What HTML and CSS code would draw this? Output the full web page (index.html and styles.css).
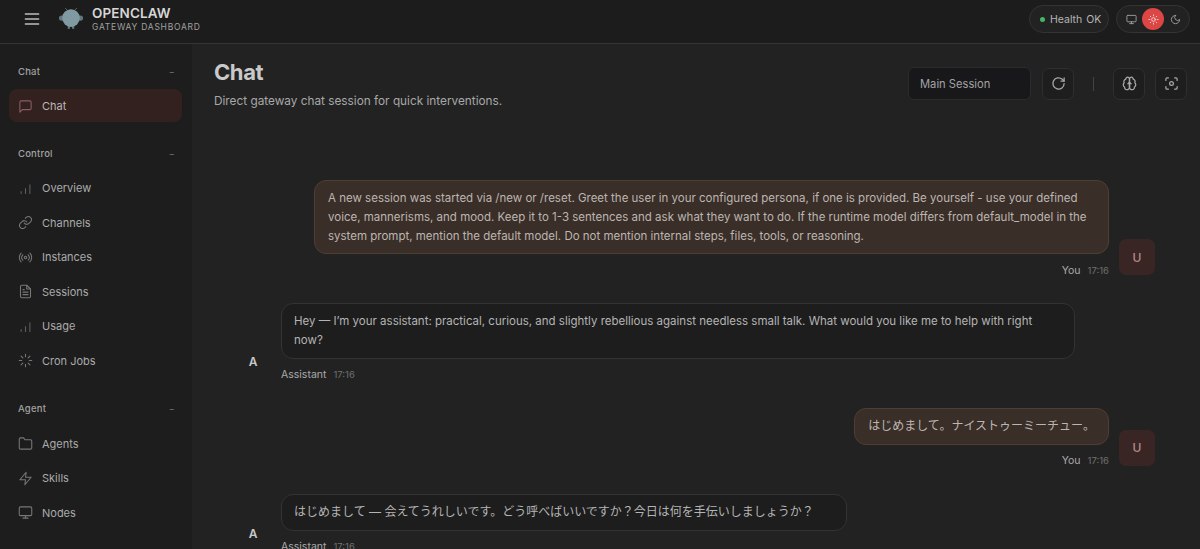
FILE: index.html
```html
<!DOCTYPE html>
<html lang="en">
<head>
<meta charset="utf-8">
<title>OpenClaw Gateway Dashboard</title>
<link rel="stylesheet" href="styles.css">
</head>
<body>
<div class="shell">
  <header class="topbar">
    <div class="brand-side">
      <button class="menu-btn" aria-label="Menu">
        <svg viewBox="0 0 24 24" class="ic-menu"><path d="M4 6h16M4 12h16M4 18h16"/></svg>
      </button>
      <svg class="logo" viewBox="0 0 28 28">
        <path class="logo-ant" d="M10 4.500 8 2.500M18 4.500l2-2"/>
        <ellipse class="logo-side" cx="3.8" cy="13" rx="2.8" ry="2.8"/>
        <ellipse class="logo-side" cx="24.2" cy="13" rx="2.800" ry="2.800"/>
        <rect class="logo-side" x="10.500" y="21" width="2.400" height="3.600"/>
        <rect class="logo-side" x="15.100" y="21" width="2.400" height="3.600"/>
        <circle class="logo-fill" cx="14" cy="13" r="9.500"/>
      </svg>
      <div class="brand-text">
        <div class="brand-title">OPENCLAW</div>
        <div class="brand-sub">GATEWAY DASHBOARD</div>
      </div>
    </div>
    <div class="top-right">
      <div class="pill health"><span class="dot"></span><span>Health</span><span class="ok">OK</span></div>
      <div class="pill theme">
        <span class="theme-btn"><svg viewBox="0 0 24 24" class="ic11"><rect x="2" y="3" width="20" height="14" rx="2"/><path d="M8 21h8M12 17v4"/></svg></span>
        <span class="theme-btn on"><svg viewBox="0 0 24 24" class="ic11"><circle cx="12" cy="12" r="4"/><path d="M12 2v2M12 20v2M4.900 4.900l1.400 1.400M17.700 17.700l1.400 1.400M2 12h2M20 12h2M6.300 17.700l-1.400 1.400M19.100 4.900l-1.400 1.400"/></svg></span>
        <span class="theme-btn"><svg viewBox="0 0 24 24" class="ic11"><path d="M12 3a6 6 0 0 0 9 9 9 9 0 1 1-9-9Z"/></svg></span>
      </div>
    </div>
  </header>
  <div class="body-row">
    <nav class="sidebar">
      <div class="nav-label first"><span>Chat</span><span class="minus">−</span></div>
      <a class="nav-item active"><svg viewBox="0 0 24 24" class="ic14"><path d="M21 15a2 2 0 0 1-2 2H7l-4 4V5a2 2 0 0 1 2-2h14a2 2 0 0 1 2 2z"/></svg>Chat</a>
      <div class="nav-label"><span>Control</span><span class="minus">−</span></div>
      <a class="nav-item"><svg viewBox="0 0 24 24" class="ic14 dim"><path d="M5 20v-3M12 20v-8M19 20V6"/></svg>Overview</a>
      <a class="nav-item"><svg viewBox="0 0 24 24" class="ic14"><path d="M10 13a5 5 0 0 0 7.500.500l3-3a5 5 0 0 0-7-7l-1.700 1.700"/><path d="M14 11a5 5 0 0 0-7.500-.500l-3 3a5 5 0 0 0 7 7l1.700-1.700"/></svg>Channels</a>
      <a class="nav-item"><svg viewBox="0 0 24 24" class="ic14"><circle cx="12" cy="12" r="2"/><path d="M16.200 7.800a6 6 0 0 1 0 8.400M7.800 16.200a6 6 0 0 1 0-8.400M19 5a10 10 0 0 1 0 14M5 19A10 10 0 0 1 5 5"/></svg>Instances</a>
      <a class="nav-item"><svg viewBox="0 0 24 24" class="ic14"><path d="M14 2H6a2 2 0 0 0-2 2v16a2 2 0 0 0 2 2h12a2 2 0 0 0 2-2V8z"/><path d="M14 2v6h6M16 13H8M16 17H8M10 9H8"/></svg>Sessions</a>
      <a class="nav-item"><svg viewBox="0 0 24 24" class="ic14 dim"><path d="M5 20v-3M12 20v-8M19 20V6"/></svg>Usage</a>
      <a class="nav-item"><svg viewBox="0 0 24 24" class="ic14"><path d="M12 2v4M12 18v4M4.900 4.900l2.900 2.900M16.200 16.200l2.900 2.900M2 12h4M18 12h4M4.900 19.100l2.900-2.900M16.200 7.800l2.900-2.900"/></svg>Cron Jobs</a>
      <div class="nav-label"><span>Agent</span><span class="minus">−</span></div>
      <a class="nav-item"><svg viewBox="0 0 24 24" class="ic14"><path d="M22 19a2 2 0 0 1-2 2H4a2 2 0 0 1-2-2V5a2 2 0 0 1 2-2h5l2 3h9a2 2 0 0 1 2 2z"/></svg>Agents</a>
      <a class="nav-item"><svg viewBox="0 0 24 24" class="ic14"><path d="M13 2 3 14h9l-1 8 10-12h-9z"/></svg>Skills</a>
      <a class="nav-item"><svg viewBox="0 0 24 24" class="ic14"><rect x="2" y="3" width="20" height="14" rx="2"/><path d="M8 21h8M12 17v4"/></svg>Nodes</a>
    </nav>
    <main class="main">
      <div class="page-head">
        <div>
          <h1 class="page-title">Chat</h1>
          <p class="page-sub">Direct gateway chat session for quick interventions.</p>
        </div>
        <div class="tools">
          <div class="session-select">Main Session</div>
          <button class="tool"><svg viewBox="0 0 24 24" class="ic14"><path d="M21 12a9 9 0 1 1-3-6.700L21 8"/><path d="M21 3v5h-5"/></svg></button>
          <span class="tool-sep"></span>
          <button class="tool"><svg viewBox="0 0 24 24" class="ic14"><path d="M12 5a3 3 0 1 0-5.997.125 4 4 0 0 0-2.526 5.770 4 4 0 0 0 .556 6.588A4 4 0 1 0 12 18Z"/><path d="M12 5a3 3 0 1 1 5.997.125 4 4 0 0 1 2.526 5.770 4 4 0 0 1-.556 6.588A4 4 0 1 1 12 18Z"/><path d="M12 18v-8M9.500 12.500 12 10l2.500 2.500"/></svg></button>
          <button class="tool"><svg viewBox="0 0 24 24" class="ic14"><path d="M3 7V5a2 2 0 0 1 2-2h2M17 3h2a2 2 0 0 1 2 2v2M21 17v2a2 2 0 0 1-2 2h-2M7 21H5a2 2 0 0 1-2-2v-2"/><circle cx="12" cy="12" r="3"/></svg></button>
        </div>
      </div>
      <section class="thread">
        <div class="group user g1">
          <div class="stack">
            <div class="bubble">A new session was started via /new or /reset. Greet the user in your configured persona, if one is provided. Be yourself - use your defined voice, mannerisms, and mood. Keep it to 1-3 sentences and ask what they want to do. If the runtime model differs from default_model in the system prompt, mention the default model. Do not mention internal steps, files, tools, or reasoning.</div>
            <div class="meta"><span class="who">You</span><span class="time">17:16</span></div>
          </div>
          <div class="avatar">U</div>
        </div>
        <div class="group assistant">
          <div class="avatar">A</div>
          <div class="stack">
            <div class="bubble wide">Hey — I’m your assistant: practical, curious, and slightly rebellious against needless small talk. What would you like me to help with right now?</div>
            <div class="meta"><span class="who">Assistant</span><span class="time">17:16</span></div>
          </div>
        </div>
        <div class="group user">
          <div class="stack">
            <div class="bubble cjk">はじめまして。ナイストゥーミーチュー。</div>
            <div class="meta"><span class="who">You</span><span class="time">17:16</span></div>
          </div>
          <div class="avatar">U</div>
        </div>
        <div class="group assistant">
          <div class="avatar">A</div>
          <div class="stack">
            <div class="bubble cjk reply">はじめまして — 会えてうれしいです。どう呼べばいいですか？今日は何を手伝いしましょうか？</div>
            <div class="meta"><span class="who">Assistant</span><span class="time">17:16</span></div>
          </div>
        </div>
      </section>
    </main>
  </div>
</div>
</body>
</html>
```
FILE: styles.css
```css
* { box-sizing: border-box; }
html, body { margin: 0; height: 100%; overflow: hidden; }
body {
  background: #222222;
  color: #c8c8c8;
  font-family: Inter, "Noto Sans CJK JP", sans-serif;
  font-size: 11px;
}
svg { fill: none; stroke: currentColor; stroke-width: 2; stroke-linecap: round; stroke-linejoin: round; flex: none; }
.ic-menu { width: 20px; height: 20px; stroke-width: 1.6; }
.ic14 { width: 15px; height: 15px; }
.ic11 { width: 11px; height: 11px; }
.shell { height: 549px; display: flex; flex-direction: column; }

.topbar {
  height: 44px; flex: none;
  display: flex; justify-content: space-between; align-items: center;
  padding: 0 10px 5px 22px;
  background: #1c1c1c;
  border-bottom: 1px solid #333333;
}
.brand-side { display: flex; align-items: center; }
.menu-btn { background: none; border: 0; padding: 0; color: #bdbdbd; width: 20px; height: 20px; display: flex; }
.logo { width: 26px; height: 26px; margin-left: 16px; stroke: none; }
.logo-fill { fill: #7f9aa1; }
.logo-side { fill: #5f777d; }
.logo-ant { stroke: #5a6f75; stroke-width: 1; }
.brand-text { margin-left: 8px; display: flex; flex-direction: column; }
.brand-title { font-size: 13.5px; font-weight: 600; color: #d6d6d6; line-height: 15px; letter-spacing: 0.1px; }
.brand-sub { font-size: 8.5px; color: #a0a0a0; line-height: 11px; letter-spacing: 0.75px; margin-top: 1px; }
.top-right { display: flex; align-items: center; gap: 7px; }
.pill { height: 28px; border: 1px solid #333333; border-radius: 14px; background: #222222; display: flex; align-items: center; }
.health { padding: 0 9px 0 10px; font-size: 10.5px; color: #b5b5b5; width: 80px; }
.health .ok { margin-left: 4px; }
.dot { width: 5px; height: 5px; border-radius: 50%; background: #45b566; margin-right: 5px; flex: none; }
.theme { padding: 0 3px; width: 74px; justify-content: space-between; }
.theme-btn { width: 22px; height: 22px; border-radius: 50%; display: flex; align-items: center; justify-content: center; color: #a0a0a0; }
.theme-btn.on { background: #dc4644; color: #f3d5d3; }

.body-row { flex: 1; display: flex; min-height: 0; }
.sidebar { width: 192px; flex: none; background: #1d1d1d; padding: 0 10px 0 9px; overflow: hidden; }
.nav-label {
  height: 16px; margin: 23px 7px 9.5px 9px;
  display: flex; justify-content: space-between; align-items: center;
  font-size: 9.5px; font-weight: 500; color: #a2a2a2; letter-spacing: 0.2px;
}
.nav-label.first { margin-top: 19px; margin-bottom: 10px; }
.minus { color: #666666; font-size: 9px; }
.nav-item {
  height: 34.5px; display: flex; align-items: center; gap: 9px; padding: 1px 0 0 9px;
  color: #ababab; border-radius: 8px;
}
.nav-item svg { color: #777777; stroke-width: 1.7; }
.nav-item svg.dim { color: #5f5f5f; }
.nav-item.active { background: #332120; color: #bdb6b4; height: 33px; }
.nav-item.active svg { color: #86605d; }

.main { flex: 1; min-width: 0; padding: 0 13px 0 22px; overflow: hidden; }
.page-head { display: flex; justify-content: space-between; align-items: flex-start; height: 68px; }
.page-title { margin: 15px 0 0; font-size: 22px; line-height: 27px; font-weight: 700; color: #c9c9c9; letter-spacing: -0.4px; }
.page-sub { margin: 7px 0 0; font-size: 11.8px; line-height: 16px; color: #a8a8a8; }
.tools { display: flex; align-items: center; margin-top: 23px; }
.session-select {
  width: 123px; height: 33px; padding-left: 11px;
  background: #18181b; border: 1px solid #2b2b2b; border-radius: 6px;
  display: flex; align-items: center; color: #a3a3a3; font-size: 11.2px;
}
.tool {
  width: 32px; height: 32px; padding: 0; color: #a8a8a8;
  background: #1e1e1e; border: 1px solid #2f2f2f; border-radius: 7px;
  display: flex; align-items: center; justify-content: center;
}
.session-select + .tool { margin-left: 11px; }
.tool-sep { width: 1px; height: 14px; background: #444444; margin: 0 19px; }
.tool-sep + .tool { margin-right: 10px; }

.thread { display: flex; flex-direction: column; margin-right: 32px; }
.group { display: flex; align-items: flex-end; }
.g1 { margin-top: 68px; }
.group + .group { margin-top: 25px; }
.group.user { justify-content: flex-end; }
.stack { display: flex; flex-direction: column; }
.user .stack { align-items: flex-end; margin-right: 10px; }
.bubble { border-radius: 12px; padding: 8px 12px; font-size: 11.5px; line-height: 18.8px; color: #b4b4b4; border: 1px solid #333333; background: #1d1d1d; }
.bubble.cjk { font-size: 12px; }
.user .bubble { padding: 8px 13px; background: #3a2e28; border-color: #4e3e33; color: #bcb6b1; }
.g1 .bubble { width: 795px; }
.bubble.wide { width: 794px; padding-right: 30px; }
.bubble.reply { width: 566px; }
.meta { height: 16px; margin-top: 8px; display: flex; align-items: center; gap: 7px; font-size: 10.5px; }
.who { color: #aaaaaa; }
.time { color: #707070; font-size: 9.5px; }
.avatar { width: 36px; height: 36px; border-radius: 7px; margin-bottom: 3px; display: flex; align-items: center; justify-content: center; font-size: 12px; font-weight: 500; flex: none; }
.user .avatar { background: #3a2525; color: #b58c88; }
.assistant .avatar { color: #c8c8c8; font-weight: 600; margin-left: 21px; margin-right: 10px; }
```
